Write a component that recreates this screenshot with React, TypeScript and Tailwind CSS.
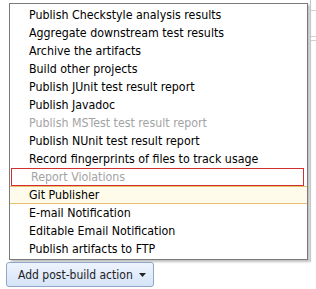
const ITEMS: { label: string; state?: 'disabled' | 'invalid' | 'hover' }[] = [
  { label: 'Publish Checkstyle analysis results' },
  { label: 'Aggregate downstream test results' },
  { label: 'Archive the artifacts' },
  { label: 'Build other projects' },
  { label: 'Publish JUnit test result report' },
  { label: 'Publish Javadoc' },
  { label: 'Publish MSTest test result report', state: 'disabled' },
  { label: 'Publish NUnit test result report' },
  { label: 'Record fingerprints of files to track usage' },
  { label: 'Report Violations', state: 'invalid' },
  { label: 'Git Publisher', state: 'hover' },
  { label: 'E-mail Notification' },
  { label: 'Editable Email Notification' },
  { label: 'Publish artifacts to FTP' },
];

export default function App() {
  return (
    <div
      className="relative w-[316px] h-[289px] bg-white overflow-hidden"
      style={{ fontFamily: '"DejaVu Sans Condensed", Tahoma, "DejaVu Sans", sans-serif' }}
    >
      {/* page behind the menu: table rules peeking out on the right */}
      <div className="absolute left-[310px] top-0 w-px h-[262px] bg-[#c8c8c8]" />
      <div className="absolute left-[311px] top-[10px] w-[5px] h-px bg-[#d0d0d0]" />
      <div className="absolute left-[311px] top-[36px] w-[5px] h-px bg-[#d0d0d0]" />
      <div className="absolute left-[311px] top-[40px] w-[5px] h-px bg-[#d0d0d0]" />

      <div className="flex flex-col items-start pt-[3px] pl-[9px]">
        {/* ── Dropdown menu ─────────────────────────────── */}
        <div className="w-[299px] border border-[#7a7a7a] bg-white pt-[2px] pb-px shadow-[2px_2px_2px_rgba(0,0,0,0.25)]">
          {ITEMS.map(({ label, state }) => (
            <div
              key={label}
              className={
                'h-[18px] flex items-center pl-[19px] text-[12.3px] leading-none whitespace-nowrap ' +
                (state === 'disabled'
                  ? 'text-[#a3a3a3]'
                  : state === 'invalid'
                    ? 'text-[#a3a3a3] ml-[1px] mr-[3px] border border-[#d03030] pl-[18px]'
                    : state === 'hover'
                      ? 'text-black bg-[#fffbea] border-y border-[#e8c070]'
                      : 'text-black')
              }
            >
              {label}
            </div>
          ))}
        </div>

        {/* ── Add button ────────────────────────────────── */}
        <button className="-ml-[3px] mt-[2px] h-[25px] w-[148px] flex items-center gap-[6px] pl-[11px] rounded-[3px] border border-[#8ea6c8] bg-gradient-to-b from-[#eef4fd] to-[#d6e4f8] text-[12px] text-[#222]">
          Add post-build action
          <svg width="7" height="4" viewBox="0 0 7 4">
            <path d="M0 0h7L3.5 4z" fill="#222" />
          </svg>
        </button>
      </div>
    </div>
  );
}
